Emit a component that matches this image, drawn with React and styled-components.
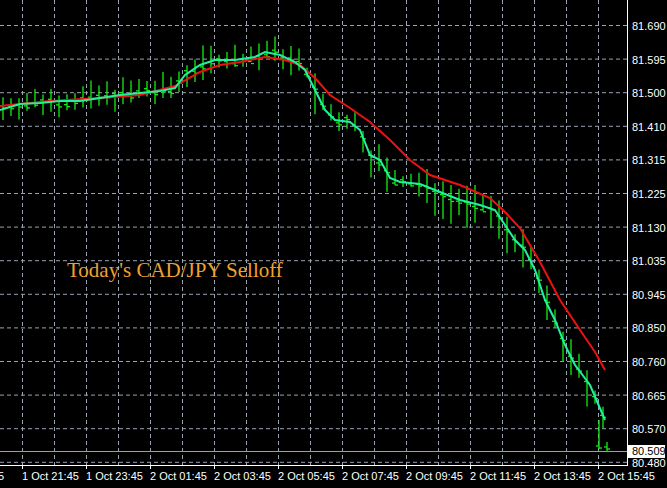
import React from "react";
import styled, { createGlobalStyle } from "styled-components";

const G = createGlobalStyle`html,body{margin:0;background:#000;overflow:hidden}`;
const Wrap = styled.div`position:relative;width:667px;height:488px;background:#000;`;
const Title = styled.div`position:absolute;left:67px;top:258px;color:#f0a030;font:21px "Liberation Serif",serif;`;

const prices = ["81.690","81.595","81.500","81.410","81.315","81.225","81.130","81.035","80.945","80.850","80.760","80.665","80.570","80.480"];
const times = ["1 Oct 21:45","1 Oct 23:45","2 Oct 01:45","2 Oct 03:45","2 Oct 05:45","2 Oct 07:45","2 Oct 09:45","2 Oct 11:45","2 Oct 13:45","2 Oct 15:45"];
const green = [[0,110],[20,104],[40,103],[60,101],[80,101],[100,98],[120,95],[140,93],[160,91],[175,88],[185,75],[200,65],[215,60],[235,60],[255,57],[265,52],[280,55],[295,62],[305,70],[315,90],[325,110],[335,120],[350,122],[360,130],[370,155],[380,160],[390,178],[400,182],[420,184],[440,192],[460,200],[480,205],[495,210],[505,225],[515,240],[525,250],[535,270],[545,300],[555,320],[565,345],[575,365],[590,385],[605,420]];
const red = [[0,106],[50,101],[100,98],[140,95],[175,86],[200,72],[220,65],[240,62],[265,57],[285,60],[300,65],[315,78],[330,95],[350,108],[370,122],[390,140],[410,160],[430,175],[460,185],[490,198],[505,212],[520,228],[540,262],[560,300],[580,330],[595,352],[605,370]];
const at = (pts, x) => { for (let i = 1; i < pts.length; i++) if (x <= pts[i][0]) { const [a, b] = pts[i-1], [c, d] = pts[i]; return b + (d-b)*(x-a)/(c-a); } return pts[pts.length-1][1]; };
const path = p => "M" + p.map(q => q.join(",")).join("L");
let s = 7;
const rnd = () => { s = (s * 9301 + 49297) % 233280; return s / 233280; };
const bars = [];
for (let x = 3; x < 606; x += 8) {
  const y = at(green, x), drop = x > 300 ? 1.8 : 1;
  const top = y - 5 - rnd()*14, bot = y + 3 + rnd()*14*drop;
  bars.push([x, top, bot, y - 4 + rnd()*8]);
}
bars.push([599, 420, 449, 446], [607, 442, 452, 447]);

export default function App() {
  return (
    <Wrap>
      <G />
      <svg width="667" height="488" style={{display:"block"}}>
        {Array.from({length:19}, (_, i) => <line key={"v"+i} x1={22+32*i+0.5} x2={22+32*i+0.5} y1="0" y2="465" stroke="#9aa2b0" strokeDasharray="4 3" />)}
        {prices.map((p, i) => <line key={"h"+i} x1="0" x2="627" y1={25.5+33.6*i} y2={25.5+33.6*i} stroke="#9aa2b0" strokeDasharray="4 3" />)}
        <line x1="0" x2="627" y1="451.5" y2="451.5" stroke="#9aa0a8" />
        {bars.map(([x, t, b, c], i) => <g key={i} stroke="#11ee11" strokeWidth="1.3"><line x1={x} x2={x} y1={t} y2={b} /><line x1={x-3} x2={x} y1={c} y2={c} /><line x1={x} x2={x+3} y1={c+2} y2={c+2} /></g>)}
        <path d={path(red)} stroke="#ee1111" strokeWidth="2" fill="none" />
        <path d={path(green)} stroke="#22f0a0" strokeWidth="2" fill="none" />
        <line x1="627.5" x2="627.5" y1="0" y2="465" stroke="#fff" />
        <line x1="0" x2="628" y1="465.5" y2="465.5" stroke="#fff" />
        {prices.map((p, i) => <text key={p} x="632" y={30+33.6*i} fill="#fff" fontSize="11" fontFamily="Liberation Sans, sans-serif">{p}</text>)}
        <rect x="628" y="445" width="37" height="13" fill="#fff" />
        <text x="632" y="455" fill="#000" fontSize="11" fontFamily="Liberation Sans, sans-serif">80.509</text>
        <text x="-2" y="480" fill="#fff" fontSize="11" fontFamily="Liberation Sans, sans-serif">5</text>
        {times.map((t, i) => <g key={t}><line x1={22+64*i+0.5} x2={22+64*i+0.5} y1="465" y2="469" stroke="#fff" /><text x={22+64*i} y="480" fill="#fff" fontSize="11" fontFamily="Liberation Sans, sans-serif">{t}</text></g>)}
      </svg>
      <Title>Today's CAD/JPY Selloff</Title>
    </Wrap>
  );
}
